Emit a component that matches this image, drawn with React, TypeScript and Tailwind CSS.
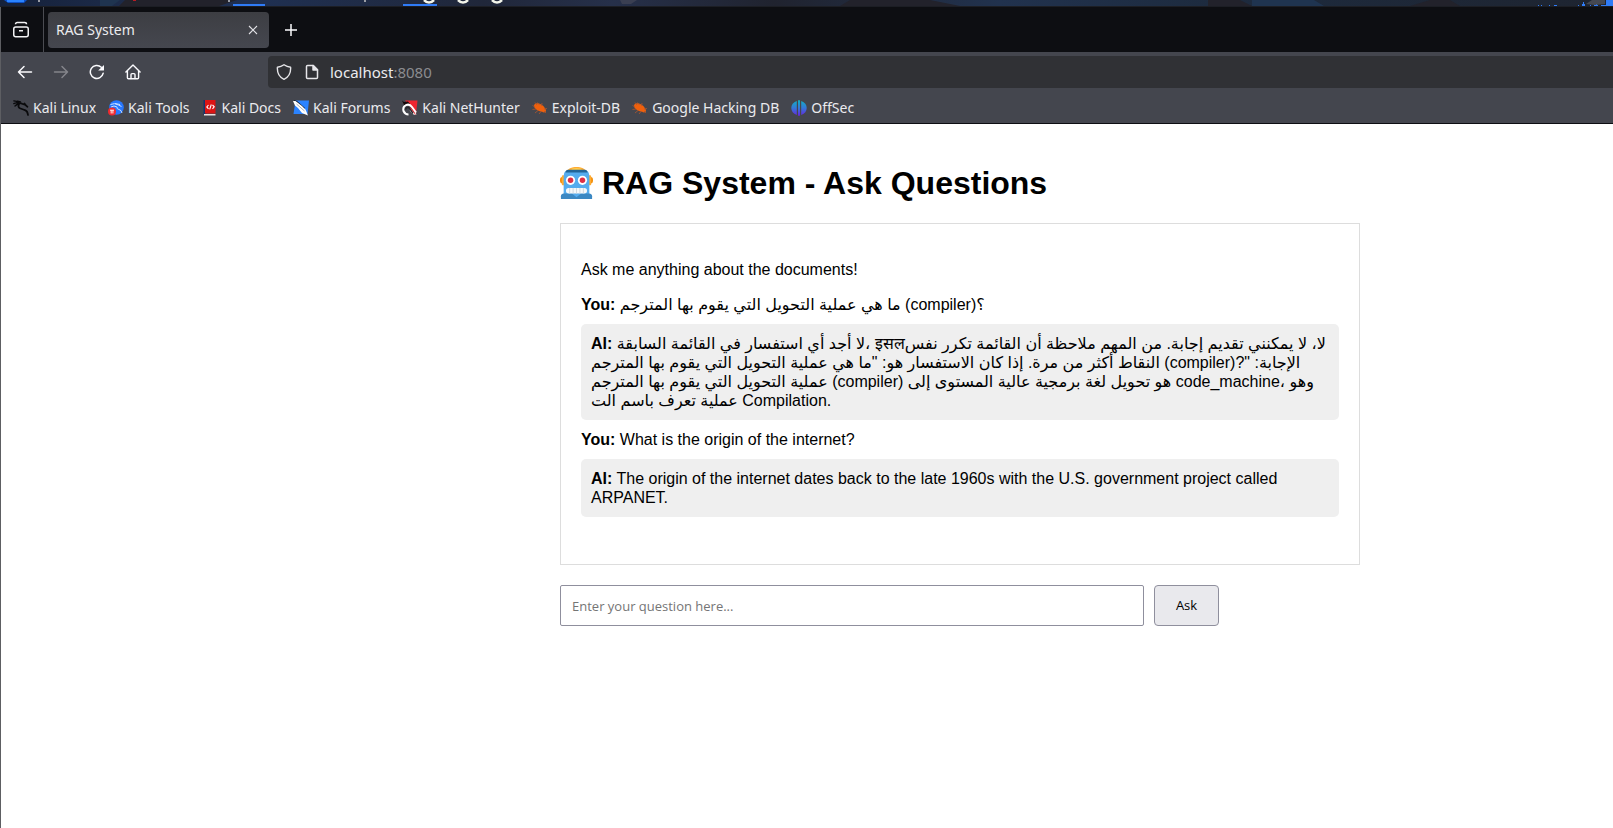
import type { ReactNode } from "react";

function DesktopStrip() {
  return (
    <div className="flex h-[7px] shrink-0 overflow-hidden border-b border-[#1c1e24] bg-[#20283a]">
      <svg width="1613" height="6" viewBox="0 0 1613 6" className="shrink-0" aria-hidden="true">
        <defs>
          <linearGradient id="strip" x1="0" x2="1613" y1="0" y2="0" gradientUnits="userSpaceOnUse">
            <stop offset="0" stopColor="#15213a" />
            <stop offset=".07" stopColor="#1c2a48" />
            <stop offset=".16" stopColor="#1f3052" />
            <stop offset=".3" stopColor="#20273a" />
            <stop offset=".38" stopColor="#26304a" />
            <stop offset=".48" stopColor="#20232f" />
            <stop offset=".62" stopColor="#21324e" />
            <stop offset=".75" stopColor="#1d2b3f" />
            <stop offset="1" stopColor="#1e2430" />
          </linearGradient>
        </defs>
        <path fill="url(#strip)" d="M0 0h1613v6H0z" />
        <path fill="#22222b" d="M119 6l6-6h112l-18 6zM840 6l10-6h80l30 6zM1208 0h32l12 6h-44zM1410 6l20-6h20l10 6z" />
        <path fill="#1f3450" d="M100 0h20l-8 6h-12zM1252 0h62l10 6h-72z" />
        <path fill="#3a3f52" d="M620 0h17l-6 4h-9z" />
        <path fill="#0d4fc4" d="M4 0h23l-3 3H8z" />
        <path fill="#2a83ff" d="M7 0h17v2H7z" />
        <path fill="#9a9da5" d="M38 0h2v2h-2zM228 0h2v2h-2zM364 0h2v2h-2z" />
        <path fill="#b91c24" d="M133 0h3v1h-3z" />
        <path fill="#2f7bf6" d="M233 4h32v2h-32zM403 4h34v2h-34z" />
        <path d="M424 0q5 5 10 0M458 0q5 5 10 0M492 0q5 5 10 0" fill="none" stroke="#f3f5ea" strokeWidth="2.5" />
        <path fill="#2f7bf6" d="M1538 5h1v1h-1zM1541 5h1v1h-1zM1549 5h1v1h-1zM1554 5h3v1h-3zM1578 5h1v1h-1zM1582 4h1V2h1v2h1v2h-3zM1590 5h1v1h-1zM1594 5h2V4h1v1h1v1h-4zM1601 5h5V0h7v6h-12z" />
        <path fill="#555961" d="M1586 4l6-4h13v4l-10 1z" opacity=".7" />
      </svg>
    </div>
  );
}

function RecentTabsIcon() {
  return (
    <svg width="18" height="18" viewBox="0 0 18 18" fill="none" stroke="#f2f2f4" strokeWidth="1.5" aria-hidden="true">
      <rect x="1.75" y="6" width="14.5" height="9.75" rx="2" />
      <path d="M3.5 3.2q0-1.7 1.8-1.7h7.4q1.8 0 1.8 1.7M7 9.8h4" />
    </svg>
  );
}

function BackIcon({ forward = false }: { forward?: boolean }) {
  return (
    <svg width="16" height="16" viewBox="0 0 16 16" fill="none" stroke={forward ? "#84858b" : "#fbfbfe"} strokeWidth="1.5" strokeLinecap="round" strokeLinejoin="round" aria-hidden="true">
      {forward ? <path d="M1.5 8h13M9 2.5L14.5 8 9 13.5" /> : <path d="M14.5 8h-13M7 2.5L1.5 8 7 13.5" />}
    </svg>
  );
}

function ReloadIcon() {
  return (
    <svg width="16" height="16" viewBox="0 0 16 16" fill="none" aria-hidden="true">
      <path d="M14.2 9.2A6.5 6.5 0 1 1 12.3 3.2" stroke="#fbfbfe" strokeWidth="1.5" strokeLinecap="round" />
      <path d="M15 .9v5.2q0 .5-.5.5H9.2z" fill="#fbfbfe" />
    </svg>
  );
}

function HomeIcon() {
  return (
    <svg width="16" height="16" viewBox="0 0 16 16" fill="none" stroke="#fbfbfe" strokeWidth="1.4" strokeLinecap="round" strokeLinejoin="round" aria-hidden="true">
      <path d="M.9 8L8 1.1 15.1 8M2.4 7v6.8q0 1 1 1h9.2q1 0 1-1V7" />
      <path d="M6 14.6v-4q0-1 1-1h2q1 0 1 1v4" />
    </svg>
  );
}

function ShieldIcon() {
  return (
    <svg width="16" height="16" viewBox="0 0 16 16" fill="none" stroke="#e6e6e9" strokeWidth="1.4" strokeLinejoin="round" aria-hidden="true">
      <path d="M8 .8Q11 3 14.6 3.2C15 9 12.3 13.3 8 15.3 3.7 13.3 1 9 1.4 3.2 5 3 8 .8 8 .8z" />
    </svg>
  );
}

function PageIcon() {
  return (
    <svg width="16" height="16" viewBox="0 0 16 16" fill="none" stroke="#e6e6e9" strokeWidth="1.5" strokeLinejoin="round" aria-hidden="true">
      <path d="M3.500 1.500h5.800L13.500 5.700v7.800q0 1-1 1h-9q-1 0-1-1v-11q0-1 1-1z" />
      <path d="M9 1.500v4.500h4.500z" fill="#e6e6e9" />
    </svg>
  );
}

function CloseIcon() {
  return (
    <svg width="10" height="10" viewBox="0 0 10 10" stroke="#e2e2e6" strokeWidth="1.1" aria-hidden="true">
      <path d="M1 1l8 8M9 1L1 9" />
    </svg>
  );
}

function PlusIcon() {
  return (
    <svg width="14" height="14" viewBox="0 0 14 14" stroke="#fbfbfe" strokeWidth="1.5" aria-hidden="true">
      <path d="M7 1v12M1 7h12" />
    </svg>
  );
}

function Favicon({ children }: { children: ReactNode }) {
  return (
    <svg width="16" height="16" viewBox="0 0 16 16" className="shrink-0" aria-hidden="true">
      {children}
    </svg>
  );
}

const dragon = (
  <Favicon>
    <g fill="none" stroke="#0a0a0c" strokeLinecap="round" strokeLinejoin="round">
      <path d="M.8.900Q3 1.500 4.500 1.200L7.500 2M.800 3.600Q3 2.500 5 3.200M2 6q1.500-1.500 3.500-2" strokeWidth="1.300" />
      <path d="M4 2.500l5 1.200 3.500 1.300 2 1.800M12.500 5l-1-1.500" strokeWidth="1.700" />
      <path d="M6 4.200Q4.500 7.500 7.500 8.500t5 1.800 2.500 4.700" strokeWidth="1.800" />
    </g>
  </Favicon>
);

const tools = (
  <Favicon>
    <circle cx="8.500" cy="7.500" r="7.300" fill="#2777ff" />
    <path d="M2.500 4.500q4-2 8 .500l3 1.500M3 7q3-2 6 0-.500 2 2 2.500t3 3.500M7 3.500l5 1" fill="none" stroke="#c9e0ff" strokeWidth="1" />
    <circle cx="4" cy="11.500" r="4" fill="#f02a2f" />
    <path d="M2 10.200h4M3.200 10.200v3.300M4.900 10.200v3.300" stroke="#fff" strokeWidth=".9" />
  </Favicon>
);

const docs = (
  <Favicon>
    <path fill="#16336b" d="M1.500 0h3v15h-3z" />
    <path fill="#dc1414" d="M3 0h10.500v13.500H3z" />
    <path fill="#e9dede" d="M2 14h11.500v1.500H2z" />
    <path d="M6.500 5L4.800 7l1.700 1.800M10.500 5l1.700 1.800-1.700 2M9.300 4.500L7.700 9.300" fill="none" stroke="#fff" strokeWidth="1.100" />
  </Favicon>
);

const forums = (
  <Favicon>
    <path fill="#2b83ff" d="M2.500.500H16L14.500 14H.500z" />
    <path fill="#101827" d="M1 0l3 1 8 7-2 2-8-6z" />
    <path fill="#fff" d="M0 1l2.500 0L9 6l3.500 3.500 2.500 6-6-2.500-4-5-3-2.500z" />
    <path d="M3.500 4l8 7" stroke="#6c7480" strokeWidth=".6" />
  </Favicon>
);

const nethunter = (
  <Favicon>
    <path fill="#ee2530" d="M3 .500h12.500L14 14z" />
    <path fill="#15090b" d="M0 .500l2 1.500 4-.500 2 2.500-5 3z" />
    <path d="M14 13.500q-2 1-4-1.500L8.500 9.500M14 12.500L10 7Q7.500 3.500 4 5.200T1.500 11q1.500 3.500 5 3.500" fill="none" stroke="#fff" strokeWidth="2" />
    <path d="M3.500 9.500q.500-2.500 3-2l2 2 2.500 4" fill="none" stroke="#26262b" strokeWidth="1.500" />
    <path d="M8.500 8l5 6.500" stroke="#ee2530" strokeWidth=".9" />
  </Favicon>
);

const bug = (
  <Favicon>
    <ellipse cx="7.500" cy="7.500" rx="6" ry="3.500" transform="rotate(28 7.500 7.500)" fill="#f0600c" />
    <circle cx="12" cy="10.500" r="2" fill="#f0600c" />
    <path d="M5 5L3 2.500M7.500 5l-2-2.500M9.500 6l.500-3M3 7L.500 5.500M4 9L.500 9.500M6 10.500l-3 2.500M9 11.500l-2 2.500M12 11l2 2M12 9l3-.500" stroke="#ad5730" strokeWidth=".8" fill="none" />
  </Favicon>
);

const offsec = (
  <Favicon>
    <defs>
      <linearGradient id="offsec" x1="0" x2="0" y1="0" y2="1">
        <stop offset="0" stopColor="#10b0c4" />
        <stop offset=".5" stopColor="#3478d8" />
        <stop offset="1" stopColor="#6526e0" />
      </linearGradient>
    </defs>
    <path fill="url(#offsec)" d="M5.800 1v14Q.300 13 .300 8T5.800 1zM7 .300h2v15.400H7zM10.200 1v14q5.500-2 5.500-7T10.200 1z" />
  </Favicon>
);

const bookmarks = [
  { label: "Kali Linux", icon: dragon },
  { label: "Kali Tools", icon: tools },
  { label: "Kali Docs", icon: docs },
  { label: "Kali Forums", icon: forums },
  { label: "Kali NetHunter", icon: nethunter },
  { label: "Exploit-DB", icon: bug },
  { label: "Google Hacking DB", icon: bug },
  { label: "OffSec", icon: offsec },
];

function BrowserChrome() {
  return (
    <header className="font-['Noto_Sans',sans-serif] text-[#ebebee]">
      <div className="flex h-[45px] items-center bg-[#0d0e12]">
        <button aria-label="Recent tabs" className="flex h-full w-[43px] items-center justify-center border-r border-[#4b4c52] pr-0.5">
          <RecentTabsIcon />
        </button>
        <div className="ml-1 flex h-9 w-[221px] items-center justify-between rounded bg-linear-to-b from-[#3d3e43] to-[#45474f] pr-2.5 pl-2">
          <span className="text-sm">RAG System</span>
          <button aria-label="Close tab" className="p-px">
            <CloseIcon />
          </button>
        </div>
        <button aria-label="New tab" className="ml-[15px]">
          <PlusIcon />
        </button>
      </div>
      <div className="flex h-10 items-center bg-[#44464e]">
        <nav className="flex w-[267px] gap-5 pl-4">
          <button aria-label="Back"><BackIcon /></button>
          <button aria-label="Forward" disabled><BackIcon forward /></button>
          <button aria-label="Reload"><ReloadIcon /></button>
          <button aria-label="Home"><HomeIcon /></button>
        </nav>
        <div className="flex h-8 flex-1 items-center rounded-l bg-[#303135] pl-2">
          <ShieldIcon />
          <span className="mr-2.5 ml-3"><PageIcon /></span>
          <span className="text-[15px]">
            localhost<span className="text-[#8b8c90]">:8080</span>
          </span>
        </div>
      </div>
      <div className="flex h-8 items-center gap-3 border-b border-[#0d0e12] bg-[#44464e] pl-3">
        {bookmarks.map(({ label, icon }) => (
          <a key={label} href="#" className="flex items-center gap-1 whitespace-nowrap text-sm">
            {icon}
            {label}
          </a>
        ))}
      </div>
    </header>
  );
}

function Robot() {
  return (
    <svg width="33" height="33" viewBox="0 0 36 36" role="img" aria-label="Robot">
      <ellipse cx="33.500" cy="14.500" rx="2.500" ry="3.500" fill="#f4900c" />
      <ellipse cx="2.500" cy="14.500" rx="2.500" ry="3.500" fill="#f4900c" />
      <path fill="#ffac33" d="M34 19c0 1-1.500 1-2 1-2 0-4-2.500-4-5.500S30 9 32 9c.500 0 2 0 2 1zM2 19c0 1 1.500 1 2 1 2 0 4-2.500 4-5.500S6 9 4 9c-.500 0-2 0-2 1z" />
      <path fill="#ffac33" d="M6 6C8 2 13 0 18 0s10 2 12 6z" />
      <path fill="#ffcc4d" d="M13 2Q18 0 23 2l1 2H12z" />
      <path fill="#55acee" d="M8 4h20c3 0 4 3 4 7v19H4V11c0-4 1-7 4-7z" />
      <path fill="#226699" d="M9 3h18q3 0 3 3H6q0-3 3-3z" />
      <path fill="#3b88c3" d="M4 29h28c1.500 0 3 1 3 3v3H1v-3c0-2 1.500-3 3-3z" />
      <path fill="#55acee" d="M13 29h10l-5 4z" />
      <circle cx="11.500" cy="14.500" r="5" fill="#fff" />
      <circle cx="24.500" cy="14.500" r="5" fill="#fff" />
      <circle cx="11.500" cy="14.500" r="3" fill="#dd2e44" />
      <circle cx="24.500" cy="14.500" r="3" fill="#dd2e44" />
      <rect x="6.500" y="23" width="23" height="6" rx="3" fill="#f5f8fa" />
      <path d="M10.500 23v6M14.300 23v6M18 23v6M21.700 23v6M25.500 23v6" stroke="#ccd6dd" strokeWidth="1" />
    </svg>
  );
}

function Question({ children }: { children: ReactNode }) {
  return (
    <div className="my-2.5">
      <strong>You:</strong> {children}
    </div>
  );
}

function Answer({ children }: { children: ReactNode }) {
  return (
    <div className="my-2.5 rounded-[5px] bg-[#efefef] p-2.5">
      <strong>AI:</strong> {children}
    </div>
  );
}

export default function App() {
  return (
    <div className="flex min-h-screen flex-col overflow-x-hidden bg-white">
      <DesktopStrip />
      <div className="flex-1 border-l border-[#5d5e62]">
        <BrowserChrome />
        <main className="mt-[41px] ml-[559px] max-w-[800px] font-['Liberation_Sans','DejaVu_Sans',sans-serif] text-base leading-[19px] text-black">
          <h1 className="mb-[21px] flex items-center gap-[9px] text-[32px] leading-[37px] font-bold">
            <Robot />
            RAG System - Ask Questions
          </h1>
          <section className="min-h-[342px] border border-[#dddddd] p-5">
            <p className="my-4">Ask me anything about the documents!</p>
            <Question>ما هي عملية التحويل التي يقوم بها المترجم (compiler)؟</Question>
            <Answer>
              لا أجد أي استفسار في القائمة السابقة، इसलلا، لا يمكنني تقديم إجابة. من المهم ملاحظة أن القائمة تكرر نفس النقاط أكثر من مرة. إذا كان الاستفسار هو: "ما هي عملية التحويل التي يقوم بها المترجم (compiler)?" الإجابة: عملية التحويل التي يقوم بها المترجم (compiler) هو تحويل لغة برمجية عالية المستوى إلى code_machine، وهو عملية تعرف باسم الت Compilation.
            </Answer>
            <Question>What is the origin of the internet?</Question>
            <Answer>
              The origin of the internet dates back to the late 1960s with the U.S. government project called ARPANET.
            </Answer>
          </section>
          <form className="mt-5 flex gap-2.5" onSubmit={(event) => event.preventDefault()}>
            <input
              type="text"
              aria-label="Your question"
              placeholder="Enter your question here..."
              className="h-[41px] w-[584px] rounded-xs border border-[#8f8f9d] px-[11px] font-['Open_Sans',sans-serif] text-[13px] placeholder:text-[#757575]"
            />
            <button className="h-[41px] w-[65px] rounded border border-[#8f8f9d] bg-[#e9e9ed] font-['Open_Sans',sans-serif] text-[13px]">
              Ask
            </button>
          </form>
        </main>
      </div>
    </div>
  );
}
